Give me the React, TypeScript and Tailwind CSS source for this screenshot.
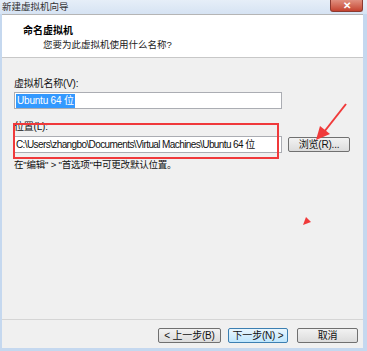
import React from "react";

const font = { fontFamily: '"Liberation Sans", "Noto Sans CJK SC", sans-serif' };

const Button = ({
  label,
  primary,
  className = "",
}: {
  label: string;
  primary?: boolean;
  className?: string;
}) => (
  <div
    className={`flex h-[15px] items-center justify-center rounded-[2px] border text-[10px] leading-none tracking-[-0.2px] text-[#111] ${
      primary
        ? "border-[#3c7fb1] bg-gradient-to-b from-[#eaf6fd] to-[#bee6fd]"
        : "border-[#707070] bg-gradient-to-b from-[#f2f2f2] to-[#dcdcdc]"
    } ${className}`}
  >
    {label}
  </div>
);

export default function App() {
  return (
    <div
      className="relative flex h-[351px] w-[367px] flex-col overflow-hidden bg-[#c5d8ef]"
      style={font}
    >
      {/* title bar */}
      <div className="flex h-[14px] items-center justify-between bg-gradient-to-b from-[#e6eef8] to-[#d6e3f3] pl-[2px]">
        <span className="text-[9.5px] leading-none text-[#333]">新建虚拟机向导</span>
        <div className="mr-[4px] flex h-[12px] w-[33px] items-center justify-center self-start rounded-b-[3px] border border-t-0 border-[#8c3a30] bg-gradient-to-b from-[#e08f7f] to-[#c4422f]">
          <span className="text-[10px] font-bold leading-none text-white">✕</span>
        </div>
      </div>

      {/* client area */}
      <div className="ml-[2px] mr-[4px] flex flex-1 flex-col border-t border-[#b5b5b5] bg-[#f0f0f0]">
        <div className="flex h-[43px] flex-col border-b border-[#c8c8c8] bg-white pl-[21px] pt-[9px]">
          <span className="text-[10px] font-bold leading-[14px] text-black">命名虚拟机</span>
          <span className="ml-[20px] text-[9.5px] leading-[14px] text-[#222]">
            您要为此虚拟机使用什么名称?
          </span>
        </div>

        <div className="flex flex-col pl-[12px] text-[10px] tracking-[-0.2px] text-[#111]">
          <span className="mt-[19px] leading-[14px]">虚拟机名称(V):</span>
          <div className="mt-[1px] flex h-[17px] w-[268px] items-center border border-[#abadb3] bg-white pl-[1px]">
            <span className="bg-[#3399ff] px-[1px] leading-[14px] text-white">Ubuntu 64 位</span>
          </div>

          <span className="mt-[11px] leading-[14px]">位置(L):</span>
          <div className="mt-[2px] flex items-center">
            <div className="flex h-[17px] w-[268px] items-center overflow-hidden whitespace-nowrap border border-[#abadb3] bg-white pl-[1px] tracking-[-0.6px]">
              C:\Users\zhangbo\Documents\Virtual Machines\Ubuntu 64 位
            </div>
            <Button label="浏览(R)..." className="ml-[6px] w-[62px]" />
          </div>
          <span className="mt-[5px] text-[9.5px] leading-[14px]">在"编辑" &gt; "首选项"中可更改默认位置。</span>
        </div>

        <div className="flex-1" />
        <div className="border-t border-[#d5d5d5]" />
        <div className="flex justify-end gap-[7px] pb-[5px] pr-[5px] pt-[8px]">
          <Button label="< 上一步(B)" className="w-[63px]" />
          <Button label="下一步(N) >" primary className="w-[60px]" />
          <Button label="取消" className="ml-[2px] w-[61px]" />
        </div>
      </div>
      <div className="h-[3px]" />

      {/* annotations */}
      <div className="absolute left-[13px] top-[123px] h-[36px] w-[266px] border-2 border-[#f0393b]" />
      <svg className="absolute left-0 top-0" width="367" height="351" viewBox="0 0 367 351">
        <line x1="346" y1="104" x2="324" y2="132" stroke="#f03a3a" strokeWidth="2" />
        <polygon points="316,140 320,126 330,134" fill="#f03a3a" />
        <polygon points="303,225 306,217 311,222" fill="#f03a3a" />
      </svg>
    </div>
  );
}
